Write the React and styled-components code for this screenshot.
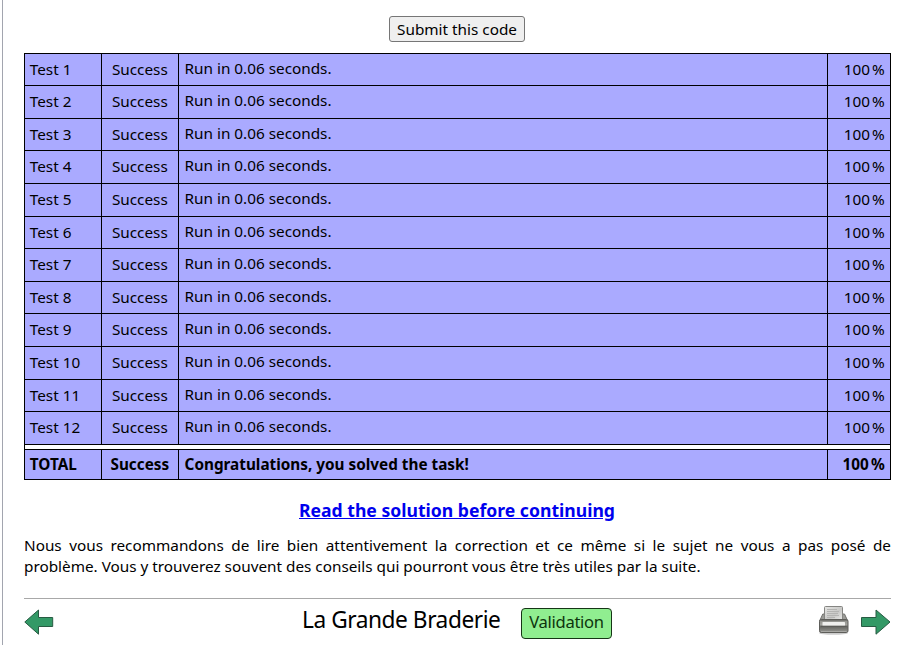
import React from "react";
import styled, { createGlobalStyle } from "styled-components";

const GlobalStyle = createGlobalStyle`
  * { box-sizing: border-box; }
  html, body { margin: 0; background: #fff; overflow: hidden; }
  body { font-family: "Noto Sans", sans-serif; font-size: 15.3px; color: #000; }
`;

const Page = styled.main`
  height: 645px;
  margin-left: 2px;
  border-left: 1px solid #a2a5af;
  padding: 16px 19px 0 21px;
`;

const SubmitRow = styled.div`
  display: flex;
  justify-content: center;
  height: 36.6px;
  align-items: flex-start;
  padding-right: 1px;
`;

const SubmitButton = styled.button`
  width: 136px;
  height: 26px;
  padding: 0;
  border: 1px solid #767676;
  border-radius: 3px;
  background: #efefef;
  color: #000;
  font: 15.3px/24px "Noto Sans", sans-serif;
  white-space: nowrap;
`;

const Results = styled.div`
  border-left: 1px solid #000;
  border-right: 1px solid #000;
`;

const ResultRow = styled.div`
  display: grid;
  grid-template-columns: 77px 77px 649px 62px;
  height: ${(p) => (p.$total ? "31.4px" : "32.6px")};
  border-top: 1px solid #000;
  border-bottom: ${(p) => (p.$total ? "1px solid #000" : "0")};
  background: #aaaaff;
  font-weight: ${(p) => (p.$total ? 700 : 400)};
  line-height: ${(p) => (p.$total ? "29px" : "30.8px")};
`;

const Cell = styled.div`
  padding: 0 5.2px 0 4.8px;
  text-align: ${(p) => p.$align || "left"};
  border-right: ${(p) => (p.$last ? "0" : "1px solid #000")};
  white-space: nowrap;
`;

const Message = styled(Cell)`
  padding-left: 5.6px;
  line-height: ${(p) => (p.$total ? "29px" : "28.6px")};
`;

const Percent = styled.span`
  margin-left: 2.2px;
`;

const Separator = styled.div`
  height: 5px;
  border-top: 1px solid #000;
  background: #fff;
`;

const SolutionLine = styled.div`
  margin-top: 17px;
  padding-right: 1px;
  text-align: center;
  font-size: 17.6px;
  font-weight: 700;
  line-height: 26px;
`;

const SolutionLink = styled.a`
  color: #0000ee;
`;

const Advice = styled.p`
  margin: 12px 0 0;
  line-height: 21px;
  text-align: justify;
`;

const Footer = styled.footer`
  display: grid;
  grid-template-columns: 1fr auto 1fr;
  margin-top: 21px;
  border-top: 1px solid #a8a8a8;
  height: 46px;
`;

const NavGroup = styled.nav`
  display: flex;
  justify-content: ${(p) => (p.$end ? "flex-end" : "flex-start")};
  gap: 12px;
  padding-top: 6px;
`;

const TitleGroup = styled.div`
  display: flex;
  align-items: flex-start;
  gap: 20px;
`;

const Title = styled.h1`
  margin: 0 0 0 -1px;
  width: 199px;
  font: 400 22.7px/41px "Noto Sans", sans-serif;
  letter-spacing: -0.45px;
  white-space: nowrap;
`;

const Badge = styled.span`
  width: 91px;
  height: 31px;
  margin-top: 9px;
  border: 1px solid #163516;
  border-radius: 4px;
  background: #90ee90;
  color: #0d350d;
  text-align: center;
  font: 16.6px/26px "Noto Sans", sans-serif;
  letter-spacing: -0.3px;
`;

const Icon = styled.svg`
  display: block;
  width: 30px;
  height: 34px;
`;

function ArrowLeft() {
  return (
    <Icon viewBox="0 0 30 34" aria-label="Previous">
      <path d="M.8 17 14.5 5v7.5h14.2v9H14.5v7.7Z" fill="#339966" stroke="#285b43" />
    </Icon>
  );
}

function ArrowRight() {
  return (
    <Icon viewBox="0 0 30 34" aria-label="Next">
      <path d="M29 17 15 5v7.500H.5v9H15v7.700Z" fill="#339966" stroke="#285b43" />
    </Icon>
  );
}

function Printer() {
  return (
    <Icon viewBox="0 0 30 34" aria-label="Print">
      <defs>
        <linearGradient id="tray" x2="0" y2="1">
          <stop stopColor="#8c8c88" />
          <stop offset=".4" stopColor="#a5a5a0" />
          <stop offset=".55" stopColor="#666662" />
          <stop offset="1" stopColor="#999994" />
        </linearGradient>
        <linearGradient id="paper" x2="1" y2="1">
          <stop stopColor="#e6e6e4" />
          <stop offset=".55" stopColor="#c8c8c6" />
          <stop offset="1" stopColor="#eeeeec" />
        </linearGradient>
      </defs>
      <ellipse cx="14.500" cy="28" rx="14.500" ry="1.700" fill="#000" opacity=".2" />
      <path d="M3.800 9 .8 15.500h27.700L25.500 9Z" fill="#9c9c98" stroke="#73736f" />
      <rect x="5.500" y="1.500" width="18" height="15" rx="1" fill="url(#paper)" stroke="#858582" />
      <path d="M8 4.500h10M8 6.500h12M8 8.500h11M8 10.500h12M8 12.500h8" stroke="#b4b4b2" />
      <rect x=".5" y="14.500" width="28.500" height="13" rx="1.700" fill="url(#tray)" stroke="#5e5e5a" />
      <path d="M1.500 15.500h26.500" stroke="#777773" />
      <rect x="3.500" y="17" width="22.500" height="3.500" rx=".6" fill="#efefed" />
      <path d="M2 21.500h25.500" stroke="#5c5c58" />
      <path d="M2 26.500h25.500" stroke="#a8a8a4" />
    </Icon>
  );
}

const tests = Array.from({ length: 12 }, (_, i) => `Test ${i + 1}`);

export default function App() {
  return (
    <>
      <GlobalStyle />
      <Page>
        <SubmitRow>
          <SubmitButton>Submit this code</SubmitButton>
        </SubmitRow>
        <Results>
          {tests.map((name) => (
            <ResultRow key={name}>
              <Cell>{name}</Cell>
              <Cell $align="center">Success</Cell>
              <Message>Run in 0.06 seconds.</Message>
              <Cell $align="right" $last>100<Percent>%</Percent></Cell>
            </ResultRow>
          ))}
          <Separator />
          <ResultRow $total>
            <Cell>TOTAL</Cell>
            <Cell $align="center">Success</Cell>
            <Message $total>Congratulations, you solved the task!</Message>
            <Cell $align="right" $last>100<Percent>%</Percent></Cell>
          </ResultRow>
        </Results>
        <SolutionLine>
          <SolutionLink href="#">Read the solution before continuing</SolutionLink>
        </SolutionLine>
        <Advice>
          Nous vous recommandons de lire bien attentivement la correction et ce même si le sujet ne vous a pas posé de
          problème. Vous y trouverez souvent des conseils qui pourront vous être très utiles par la suite.
        </Advice>
        <Footer>
          <NavGroup><ArrowLeft /></NavGroup>
          <TitleGroup>
            <Title>La Grande Braderie</Title>
            <Badge>Validation</Badge>
          </TitleGroup>
          <NavGroup $end><Printer /><ArrowRight /></NavGroup>
        </Footer>
      </Page>
    </>
  );
}
